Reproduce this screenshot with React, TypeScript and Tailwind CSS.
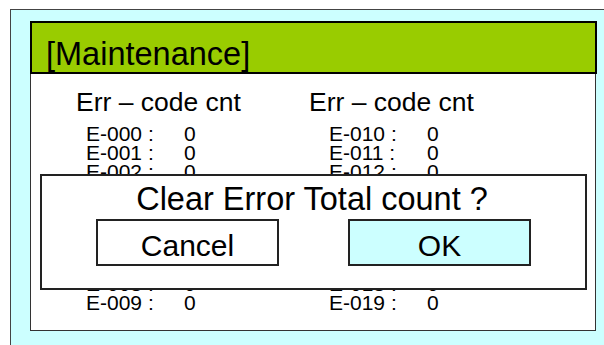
import React from 'react';

const leftRows = ['E-000', 'E-001', 'E-002', 'E-003', 'E-004', 'E-005', 'E-006', 'E-007', 'E-008', 'E-009'];
const rightRows = ['E-010', 'E-011', 'E-012', 'E-013', 'E-014', 'E-015', 'E-016', 'E-017', 'E-018', 'E-019'];

const ErrColumn: React.FC<{ codes: string[]; width: string }> = ({ codes, width }) => (
  <div className={`flex flex-col ${width}`}>
    {codes.map((code) => (
      <div key={code} className="flex h-[18.8px] text-[21px] leading-[18.8px] text-black">
        <span className="w-[98px] whitespace-pre">{code} :</span>
        <span>0</span>
      </div>
    ))}
  </div>
);

export default function App() {
  return (
    <div
      className="w-[604px] h-[345px] overflow-hidden bg-white pt-[9px] pl-[10px]"
      style={{ fontFamily: '"Liberation Sans", Arial, sans-serif' }}
    >
      <div className="h-full border-l border-t border-[#444] bg-[#ccffff] pt-[11px] pl-[19px]">
        {/* Maintenance panel */}
        <div className="flex h-[310px] w-[567px] flex-col">
          <div className="h-[53px] border-2 border-black bg-[#99cc00] pl-[14px] pt-[15px] text-[32.5px] leading-[32px] text-black">
            [Maintenance]
          </div>

          <div className="relative mr-[1px] flex-1 border-x border-b border-[#333] bg-white">
            {/* column titles */}
            <div className="flex pl-[45px] pt-[14px] text-[26.5px] leading-[29px] text-black">
              <span className="w-[233px]">Err – code cnt</span>
              <span>Err – code cnt</span>
            </div>

            {/* counts */}
            <div className="flex pl-[55px] pt-[8px]">
              <ErrColumn codes={leftRows} width="w-[243px]" />
              <ErrColumn codes={rightRows} width="w-[200px]" />
            </div>

            {/* confirm dialog */}
            <div className="absolute left-[9px] top-[100px] flex h-[116px] w-[547px] flex-col items-center border-2 border-[#222] bg-white">
              <div className="pt-[7px] pr-[3px] text-[32.5px] leading-[32px] text-black">Clear Error Total count ?</div>
              <div className="mt-[4px] flex gap-[69px]">
                <button
                  type="button"
                  className="flex h-[47px] w-[183px] items-center justify-center border-2 border-[#222] bg-white pt-[7px] text-[30px] leading-[30px] text-black"
                >
                  Cancel
                </button>
                <button
                  type="button"
                  className="flex h-[47px] w-[183px] items-center justify-center border-2 border-[#222] bg-[#ccffff] pt-[7px] text-[30px] leading-[30px] text-black"
                >
                  OK
                </button>
              </div>
            </div>
          </div>
        </div>
      </div>
    </div>
  );
}
